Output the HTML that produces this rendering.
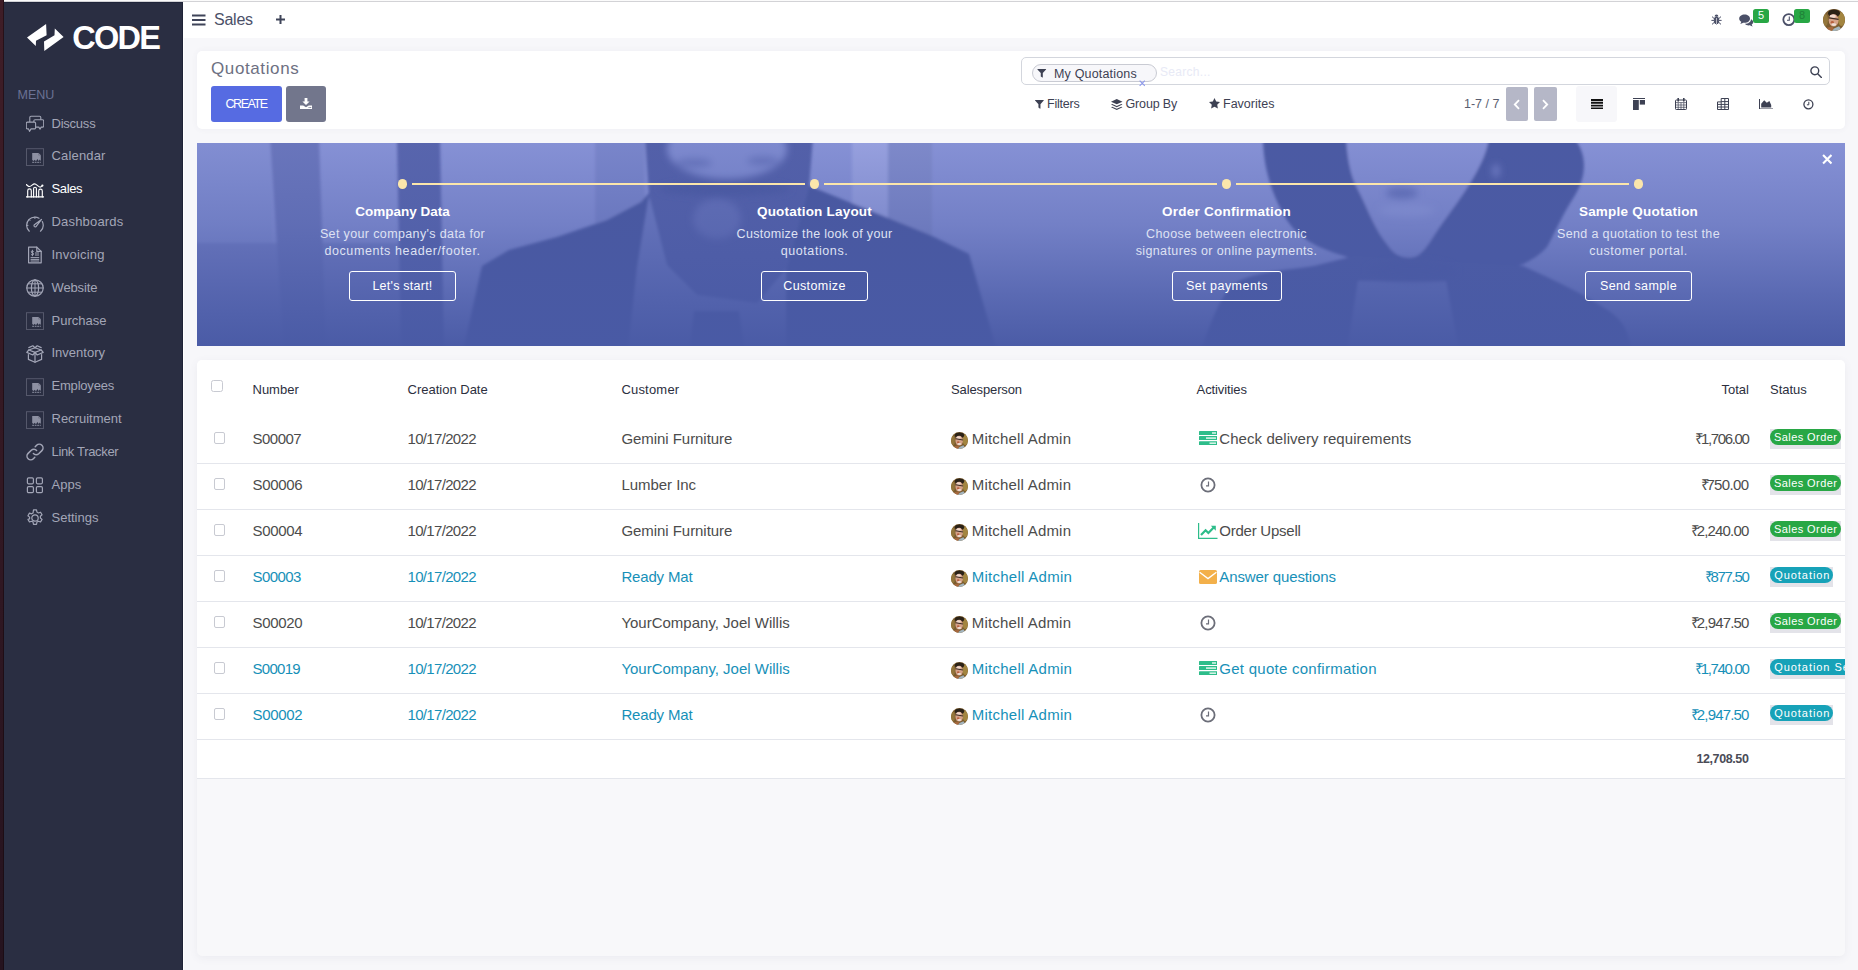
<!DOCTYPE html>
<html lang="en">
<head>
<meta charset="utf-8">
<title>Odoo - Quotations</title>
<style>
*{box-sizing:border-box;margin:0;padding:0}
html,body{width:1858px;height:970px;overflow:hidden}
body{position:relative;background:#f7f7fa;font-family:"Liberation Sans",sans-serif;color:#4c4c4c;font-size:14px}
.abs{position:absolute}
.t{position:absolute;white-space:nowrap;line-height:1}
/* window edge */
#edge{left:0;top:0;width:4px;height:970px;background:linear-gradient(#3f1d27,#25131f);border-right:1px solid rgba(20,8,12,.55)}
#topline{left:4px;top:0;width:1854px;height:2px;background:linear-gradient(#fbfbfb 0,#fbfbfb 50%,#c9c9cc 50%,#dcdce0 100%)}
/* sidebar */
#sidebar{left:4px;top:2px;width:179px;height:968px;background:#2a2e42;border-right:1px solid #1f2337;border-top:1px solid #20253a}
#sidegap{left:183px;top:2px;width:1px;height:968px;background:#fff}
.mi{left:51.5px;font-size:13px;color:#a3a6b7}
.mi.on{color:#fff}
.ic{position:absolute;left:26px;width:18px;height:18px}
/* header */
#header{left:184px;top:2px;width:1674px;height:36px;background:#fff}
/* control panel */
#cp{left:197px;top:51px;width:1648px;height:78px;background:#fff;border-radius:5px;box-shadow:0 0 6px rgba(90,90,120,.06)}
#create{left:211px;top:86px;width:71px;height:36px;background:#566be2;border-radius:3px;color:#fff}
#import{left:286px;top:86px;width:40px;height:36px;background:#72768c;border-radius:3px}
#search{left:1021px;top:57px;width:809px;height:28px;border:1px solid #d3d6dd;border-radius:5px;background:#fff}
#facet{left:1032px;top:64px;width:125px;height:18px;border:1px solid #c9cbd3;border-radius:9px;background:#f7f7fa}
.pg{top:87px;width:22px;height:34px;background:#b5b7c7;border-radius:2px}
#vlist{left:1576px;top:86px;width:41px;height:36px;background:#f7f7fa;border-radius:3px}
/* banner */
#banner{left:197px;top:143px;width:1648px;height:203px;overflow:hidden;background:#6c7cc4}
.bt{font-weight:bold;font-size:14px;color:#fff}
.bd{font-size:13px;color:#dfe2f3}
.bb{position:absolute;top:271px;height:30px;border:1px solid #fff;border-radius:3px}
.bbt{font-size:13px;color:#fff}
/* list */
#list{left:197px;top:360px;width:1648px;height:596px;background:#f8f8fa;border-radius:5px;box-shadow:0 2px 8px rgba(90,90,120,.07);overflow:hidden}
#tbl{left:0;top:0;width:1648px;height:418px;background:#fff}
.sep{position:absolute;left:0;width:1648px;height:1px;background:#e4e6ec}
.th{font-size:12px;color:#2c2f3e}
.td{font-size:14px;color:#4c4c4c}
.bl{color:#1790b8}
.cb{position:absolute;width:11px;height:11px;border:1px solid #c8cad2;border-radius:2px;background:#fff}
.bg{position:absolute;height:20px;background:#e3e3e9}
.pill{position:absolute;left:0;top:0;height:16px;border-radius:8px;color:#fff;font-size:11px;white-space:nowrap;overflow:hidden}
.g{background:#28a745}
.q{background:#17a2b8}
</style>
</head>
<body>
<div id="edge" class="abs"></div>
<div id="topline" class="abs"></div>
<div id="sidebar" class="abs"></div>
<div id="sidegap" class="abs"></div>
<div id="header" class="abs"></div>
<svg class="abs" style="left:26px;top:22px" width="40" height="30" viewBox="26 22 40 30"><path d="M27 37.600L46.100 23.900 46.600 35.300 36 40.700 35.800 46.100z" fill="#fff"/><path d="M44 41.400L54.500 35.300 54.800 28.600 63.600 37 44.300 50.900z" fill="#fff"/></svg>
<div class="t" id="logo" style="left:72.2px;top:22.0px;font-size:32.500px;font-weight:bold;color:#fff;letter-spacing:-1.73px">CODE</div>
<div class="t" id="menu" style="left:17.500px;top:89.0px;font-size:12.500px;color:#6b7294">MENU</div>
<svg class="ic" style="top:114.9px" viewBox="0 0 18 18" fill="none" stroke="#a3a6b7" stroke-width="1.1" stroke-linecap="round" stroke-linejoin="round"><path d="M3.800 7.500V2.400a1.200 1.200 0 0 1 1.200-1.200h8.600a1.200 1.200 0 0 1 1.200 1.200V5"/><path d="M9 4.800h7.500a1.200 1.200 0 0 1 1.200 1.200v4.900a1.200 1.200 0 0 1-1.200 1.200h-1.300l-1.200 2-1.200-2H9a1.200 1.200 0 0 1-1.200-1.200V6A1.200 1.200 0 0 1 9 4.800z" fill="#2a2e42"/><path d="M1.500 7.100h6.900a1.200 1.200 0 0 1 1.200 1.200v4.400a1.200 1.200 0 0 1-1.200 1.200H5l-1.500 2.500-1-2.500h-1a1.200 1.200 0 0 1-1.200-1.200V8.300a1.200 1.200 0 0 1 1.200-1.200z" fill="#2a2e42"/></svg>
<div class="t mi" id="m0" style="top:116.6px;letter-spacing:-0.23px">Discuss</div>
<svg class="ic" style="top:147.8px" viewBox="0 0 18 18"><rect x="0.500" y="0.700" width="17" height="16.800" fill="none" stroke="#55586b" stroke-width="1"/><path d="M6.200 5h6.400l2.200 2.200v6l-1-1.600-1.100 1.400-1.300-2-1.400 2.200-1.300-1.400-1.100 1.200-1.400-1z" fill="#8d90a2"/><path d="M12.600 5v2.200h2.200" fill="none" stroke="#6c6f82" stroke-width=".6"/><path d="M6.200 14.300h8.600" stroke="#8d90a2" stroke-width="1" stroke-dasharray="1.800 .700"/></svg>
<div class="t mi" id="m1" style="top:148.6px;letter-spacing:0.16px">Calendar</div>
<svg class="ic" style="top:180.6px" viewBox="0 0 18 18" fill="none" stroke="#fff" stroke-width="1.15" stroke-linecap="round" stroke-linejoin="round"><path d="M-.1 15.900h18.300" stroke-width="1.400"/><path d="M1.700 15.900V9.700a1.800 1.800 0 0 1 3.600 0V15.900M7.600 15.900V7.600a1.400 1.400 0 0 1 2.800 0V15.900M12.700 15.900V9.900a1.800 1.800 0 0 1 3.600 0V15.900"/><path d="M.2 3.600C1.400 4.200 2.200 5.600 3.600 5.500 5.400 5.400 6.800 2.800 8.600 2.800c1.800 0 3.600 3.200 5.500 3.300.9 0 1.500-.6 2-1.200"/><circle cx="16.400" cy="4.600" r="1.100" fill="#fff" stroke="none"/></svg>
<div class="t mi on" id="m2" style="top:181.6px;letter-spacing:-0.35px">Sales</div>
<svg class="ic" style="top:213.5px" viewBox="0 0 18 18" fill="none" stroke="#a3a6b7" stroke-width="1.2" stroke-linecap="round" stroke-linejoin="round"><path d="M3.300 17.200A8.300 8.300 0 0 1 .6 11.400 8.300 8.300 0 0 1 8.900 3.100c1.500 0 2.900.4 4.100 1.100"/><path d="M16.300 7.600a8.300 8.300 0 0 1-1.800 9.600"/><path d="M15.500 5.400L9 10.300a1.300 1.300 0 0 0-.7 2.100 1.300 1.300 0 0 0 2.100-.2z"/><path d="M8.900 3.100v1.400M.7 11.400h1.300M3.100 5.600l.9.900" stroke-width="1"/></svg>
<div class="t mi" id="m3" style="top:214.6px;letter-spacing:0.18px">Dashboards</div>
<svg class="ic" style="top:246.3px" viewBox="0 0 18 18" fill="none" stroke="#a3a6b7" stroke-width="1.2" stroke-linecap="round" stroke-linejoin="round"><path d="M2.600 1.200h8.200l4.400 4.200v11.400H2.600z"/><path d="M10.800 1.200v4.200h4.400"/><path d="M5 11.600h7.800M5 13.400h7.800M5 15h7.800M9.400 7h3.200M9.400 9h3.200" stroke-width="1"/><path d="M7.600 5.400c-.3-.6-2.400-.8-2.400.5s2.500.7 2.500 2-2.200 1.200-2.600.5M6.400 4.200v5.600" stroke-width="1"/></svg>
<div class="t mi" id="m4" style="top:247.6px;letter-spacing:0.21px">Invoicing</div>
<svg class="ic" style="top:279.1px" viewBox="0 0 18 18" fill="none" stroke="#a3a6b7" stroke-width="1.2" stroke-linecap="round" stroke-linejoin="round"><circle cx="9" cy="9" r="8.200"/><ellipse cx="9" cy="9" rx="3.600" ry="8.200"/><path d="M9 .8v16.400M.8 9h16.400M2 4.800h14M2 13.200h14" stroke-width="1"/></svg>
<div class="t mi" id="m5" style="top:280.6px;letter-spacing:-0.13px">Website</div>
<svg class="ic" style="top:312.0px" viewBox="0 0 18 18"><rect x="0.500" y="0.700" width="17" height="16.800" fill="none" stroke="#55586b" stroke-width="1"/><path d="M6.200 5h6.400l2.200 2.200v6l-1-1.600-1.100 1.400-1.300-2-1.400 2.200-1.300-1.400-1.100 1.200-1.400-1z" fill="#8d90a2"/><path d="M12.600 5v2.200h2.200" fill="none" stroke="#6c6f82" stroke-width=".6"/><path d="M6.200 14.300h8.600" stroke="#8d90a2" stroke-width="1" stroke-dasharray="1.800 .700"/></svg>
<div class="t mi" id="m6" style="top:313.6px">Purchase</div>
<svg class="ic" style="top:344.9px" viewBox="0 0 18 18" fill="none" stroke="#a3a6b7" stroke-width="1.2" stroke-linecap="round" stroke-linejoin="round"><path d="M2.400 9.600v4.800L9 17.200l6.600-2.800V9.600"/><path d="M9 7.400v9.800"/><path d="M2.800 5L9 7.400 15.200 5 9 2.800z"/><path d="M2.800 5L.8 7.400 6.800 10 9 7.400l2.200 2.600 6-2.600-2-2.400"/><path d="M9 2.800L6.800.8 2.800 2.600M9 2.800l2.200-2 4 1.800"/></svg>
<div class="t mi" id="m7" style="top:345.6px">Inventory</div>
<svg class="ic" style="top:377.7px" viewBox="0 0 18 18"><rect x="0.500" y="0.700" width="17" height="16.800" fill="none" stroke="#55586b" stroke-width="1"/><path d="M6.200 5h6.400l2.200 2.200v6l-1-1.600-1.100 1.400-1.300-2-1.400 2.200-1.300-1.400-1.100 1.200-1.400-1z" fill="#8d90a2"/><path d="M12.600 5v2.200h2.200" fill="none" stroke="#6c6f82" stroke-width=".6"/><path d="M6.200 14.300h8.600" stroke="#8d90a2" stroke-width="1" stroke-dasharray="1.800 .700"/></svg>
<div class="t mi" id="m8" style="top:378.6px;letter-spacing:-0.20px">Employees</div>
<svg class="ic" style="top:410.6px" viewBox="0 0 18 18"><rect x="0.500" y="0.700" width="17" height="16.800" fill="none" stroke="#55586b" stroke-width="1"/><path d="M6.200 5h6.400l2.200 2.200v6l-1-1.600-1.100 1.400-1.300-2-1.400 2.200-1.300-1.400-1.100 1.200-1.400-1z" fill="#8d90a2"/><path d="M12.600 5v2.200h2.200" fill="none" stroke="#6c6f82" stroke-width=".6"/><path d="M6.200 14.300h8.600" stroke="#8d90a2" stroke-width="1" stroke-dasharray="1.800 .700"/></svg>
<div class="t mi" id="m9" style="top:411.6px">Recruitment</div>
<svg class="ic" style="top:443.4px" viewBox="0 0 18 18" fill="none" stroke="#a3a6b7" stroke-width="1.2" stroke-linecap="round" stroke-linejoin="round"><path d="M7.400 10.600a3.700 3.700 0 0 0 5.300.2l3.200-3.200a3.700 3.700 0 0 0-5.300-5.300L9.200 3.700" stroke-width="1.500"/><path d="M10.600 7.400a3.700 3.700 0 0 0-5.300-.2L2.100 10.400a3.700 3.700 0 0 0 5.300 5.300l1.400-1.400" stroke-width="1.500"/></svg>
<div class="t mi" id="m10" style="top:444.6px;letter-spacing:-0.33px">Link Tracker</div>
<svg class="ic" style="top:476.2px" viewBox="0 0 18 18" fill="none" stroke="#a3a6b7" stroke-width="1.2" stroke-linecap="round" stroke-linejoin="round" stroke-width="1.4"><rect x="1.400" y="1.800" width="6" height="6" rx="1.200"/><rect x="10.400" y="1.800" width="6" height="6" rx="1.200"/><rect x="1.400" y="10.600" width="6" height="6" rx="1.200"/><rect x="10.400" y="10.600" width="6" height="6" rx="1.200"/></svg>
<div class="t mi" id="m11" style="top:477.6px">Apps</div>
<svg class="ic" style="top:509.1px" viewBox="0 0 18 18" fill="none" stroke="#a3a6b7" stroke-width="1.2" stroke-linecap="round" stroke-linejoin="round"><circle cx="9" cy="9" r="3.200"/><path d="M7.500.9h3l.45 2.200 1.500.85 2.100-.75 1.500 2.600-1.650 1.450v1.700l1.650 1.450-1.500 2.600-2.100-.75-1.500.85-.45 2.200h-3l-.45-2.200-1.500-.85-2.100.75-1.500-2.600L3.600 9.850v-1.700L1.950 6.700l1.500-2.600 2.100.75 1.500-.85z"/></svg>
<div class="t mi" id="m12" style="top:510.6px">Settings</div>
<svg class="abs" style="left:192px;top:14px" width="14" height="12" viewBox="0 0 14 12"><path d="M0 1.500h13.500M0 6h13.500M0 10.500h13.500" stroke="#3f4459" stroke-width="2"/></svg>
<div class="t" id="hsales" style="left:214px;top:12.3px;font-size:16px;color:#4b5068;letter-spacing:-0.25px">Sales</div>
<svg class="abs" style="left:276px;top:15px" width="9" height="9" viewBox="0 0 9 9"><path d="M4.500 0v9M0 4.500h9" stroke="#3f4459" stroke-width="2"/></svg>
<svg class="abs" style="left:1711px;top:14px" width="11" height="11" viewBox="0 0 11 11" fill="none" stroke="#4b5068" stroke-width="1"><ellipse cx="5.500" cy="6.400" rx="2.300" ry="3.600" fill="#4b5068"/><path d="M3.600 2.400a1.900 1.900 0 0 1 3.800 0z" fill="#4b5068" stroke="none"/><path d="M0.400 6.400h2.600M8 6.400h2.600M1 2.600l2.200 2M10 2.600l-2.200 2M1 10.400l2.200-2M10 10.400l-2.200-2"/><path d="M5.500 4v6" stroke="#fff" stroke-width=".6"/></svg>
<svg class="abs" style="left:1739.300px;top:13.500px" width="15" height="13" viewBox="0 0 15 13"><path d="M5.600 0.600c3 0 5.400 1.800 5.400 4.100s-2.400 4.100-5.400 4.100c-.5 0-1-.05-1.400-.15-.9.700-2 1-3 1.100.6-.6 1-1.300 1.100-2C1.100 7 .2 6 .2 4.700.2 2.400 2.600.6 5.600.6z" fill="#4b5068"/><path d="M12 5.200c1.300.6 2.200 1.700 2.200 2.900 0 1-.6 1.900-1.500 2.500.1.700.5 1.300 1 1.800-1-.1-2-.5-2.800-1.100-.4.100-.8.100-1.200.1-1.600 0-3-.6-3.800-1.600 3.200 0 6-1.800 6.100-4.600z" fill="#4b5068"/></svg>
<div class="abs" style="left:1753.200px;top:9px;width:15.800px;height:13.600px;background:#28a745;border-radius:2.500px"></div>
<div class="t" id="b5" style="left:1758px;top:10px;font-size:11px;color:#fff">5</div>
<svg class="abs" style="left:1782px;top:13px" width="14" height="14" viewBox="0 0 14 14" fill="none" stroke="#4b5068"><circle cx="6.800" cy="6.600" r="5.500" stroke-width="1.800"/><path d="M7.300 3.600v3.600H5" stroke-width="1.100"/></svg>
<div class="abs" style="left:1794px;top:9px;width:16px;height:13.600px;background:#28a745;border-radius:2.500px"></div>
<div class="t" id="b8" style="left:1799px;top:10px;font-size:11px;color:#1f7f37">8</div>
<svg class="abs" style="left:1823px;top:9px" width="22" height="22" viewBox="0 0 22 22"><defs><clipPath id="avc"><circle cx="11" cy="11" r="11"/></clipPath><filter id="avb"><feGaussianBlur stdDeviation="0.600"/></filter></defs><g clip-path="url(#avc)"><rect width="22" height="22" fill="#7b5c2f"/><g filter="url(#avb)"><ellipse cx="18.500" cy="10" rx="3.500" ry="7" fill="#a3853f"/><ellipse cx="2.500" cy="11" rx="2.500" ry="6" fill="#94763a"/><ellipse cx="11" cy="4.300" rx="6" ry="3.800" fill="#2a2019"/><ellipse cx="10.600" cy="11.300" rx="4.900" ry="6.300" fill="#d5a288"/><ellipse cx="9.800" cy="7.200" rx="3" ry="1.700" fill="#f0d8cc"/><path d="M6 8.800L15.600 10.400" stroke="#3b2b24" stroke-width="1.300"/><ellipse cx="9.300" cy="13.200" rx="1.600" ry="1.200" fill="#b9603f"/><ellipse cx="10.800" cy="15.600" rx="2.400" ry="1.300" fill="#eedfd8"/><path d="M3 22L4.500 18.500 9 17.500 11 19.500 9 22z" fill="#a5683e"/><path d="M11 19.500L16 17.300 19.500 22 9 22z" fill="#a3b5bf"/></g></g></svg>
<div id="cp" class="abs"></div>
<div class="t" id="qt" style="left:211px;top:59.5px;font-size:17px;color:#6d7082;letter-spacing:0.61px">Quotations</div>
<div id="create" class="abs"></div><div class="t" id="createt" style="left:225.500px;top:98.0px;font-size:12.500px;color:#fff;letter-spacing:-1.46px">CREATE</div>
<div id="import" class="abs"></div>
<svg class="abs" style="left:300px;top:97.500px" width="12" height="11" viewBox="0 0 12 11"><path d="M4.600 0h2.800v3.400h2.200L6 7 2.400 3.400h2.200z" fill="#fff"/><path d="M0 7.400h3.200L6 9.200l2.800-1.800H12V11H0z" fill="#fff"/><rect x="8.600" y="9" width="1" height="1" fill="#72768c"/><rect x="10.200" y="9" width="1" height="1" fill="#72768c"/></svg>
<div id="search" class="abs"></div><div id="facet" class="abs"></div>
<svg class="abs" style="left:1037.4px;top:68.8px" width="9.5" height="8.8" viewBox="0 0 10 10"><path d="M.3 0h9.400c.3 0 .4.300.2.500L6.200 4.600v4.800c0 .3-.3.400-.5.300L3.900 8.400V4.600L.1.500C-.1.300 0 0 .3 0z" fill="#3d4153"/></svg>
<div class="t" id="myq" style="left:1054px;top:68.0px;font-size:12.500px;color:#3d4153;letter-spacing:0.17px">My Quotations</div>
<svg class="abs" style="left:1138.500px;top:80px" width="6.500" height="6.500" viewBox="0 0 7 7"><path d="M.7.7l5.600 5.600M6.300.7L.7 6.300" stroke="#8e9aec" stroke-width="1.200"/></svg>
<div class="t" id="ph" style="left:1160px;top:65.5px;font-size:12px;color:#e8eaf6;letter-spacing:.3px">Search...</div>
<svg class="abs" style="left:1810px;top:66px" width="12" height="12" viewBox="0 0 12 12" fill="none" stroke="#3d4153" stroke-width="1.400"><circle cx="4.800" cy="4.800" r="3.900"/><path d="M7.700 7.700l3.700 3.700" stroke-linecap="round"/></svg>
<svg class="abs" style="left:1035.3px;top:99.8px" width="8.8" height="9" viewBox="0 0 10 10"><path d="M.3 0h9.400c.3 0 .4.300.2.500L6.200 4.600v4.800c0 .3-.3.400-.5.300L3.900 8.400V4.600L.1.500C-.1.300 0 0 .3 0z" fill="#3d4153"/></svg>
<div class="t" id="fil" style="left:1047px;top:98.0px;font-size:12.500px;color:#3d4153;letter-spacing:-0.22px">Filters</div>
<svg class="abs" style="left:1111px;top:98.500px" width="11.500" height="11.500" viewBox="0 0 12 12"><path d="M6 0l6 2.800L6 5.600 0 2.800z" fill="#3d4153"/><path d="M1.300 5.100L0 5.700l6 2.800 6-2.800-1.300-.6L6 7.300z" fill="#3d4153"/><path d="M1.300 8L0 8.600l6 2.800 6-2.800-1.300-.6L6 10.200z" fill="#3d4153"/></svg>
<div class="t" id="grp" style="left:1125.500px;top:98.0px;font-size:12.500px;color:#3d4153;letter-spacing:-0.14px">Group By</div>
<svg class="abs" style="left:1209px;top:98.300px" width="11" height="10.500" viewBox="0 0 11 10.500"><path d="M5.500 0l1.700 3.500 3.800.5-2.800 2.700.7 3.800-3.400-1.800-3.400 1.800.7-3.800L0 4l3.800-.5z" fill="#3d4153"/></svg>
<div class="t" id="fav" style="left:1223px;top:98.0px;font-size:12.500px;color:#3d4153">Favorites</div>
<div class="t" id="pager" style="left:1464px;top:98.0px;font-size:12.500px;color:#5a5e70">1-7 / 7</div>
<div class="abs pg" style="left:1506px"></div><div class="abs pg" style="left:1534px;width:23px"></div>
<svg class="abs" style="left:1513px;top:98.500px" width="8" height="11" viewBox="0 0 8 11" fill="none" stroke="#fff" stroke-width="1.800"><path d="M6 1.200L1.800 5.500 6 9.800"/></svg>
<svg class="abs" style="left:1541px;top:98.500px" width="8" height="11" viewBox="0 0 8 11" fill="none" stroke="#fff" stroke-width="1.800"><path d="M2 1.200L6.200 5.500 2 9.800"/></svg>
<div id="vlist" class="abs"></div>
<svg class="abs" style="left:1590.500px;top:98.700px" width="12.400" height="10.400" viewBox="0 0 12.400 10.400"><path d="M0 1h12.400M0 3.800h12.400M0 6.600h12.400M0 9.400h12.400" stroke="#111" stroke-width="1.900"/></svg>
<svg class="abs" style="left:1632.800px;top:98px" width="12.200" height="12" viewBox="0 0 12.200 12"><rect x="0" y="0" width="12.200" height="1" fill="#3d4153"/><rect x="0" y="2" width="5.800" height="10" fill="#3d4153"/><rect x="6.800" y="2" width="5.400" height="4.600" fill="#3d4153"/></svg>
<svg class="abs" style="left:1675px;top:98px" width="12" height="12" viewBox="0 0 12 12" fill="none" stroke="#3d4153"><rect x=".5" y="2" width="11" height="9.500" rx=".8" stroke-width="1"/><path d="M.5 4.600h11M.5 7h11M.5 9.300h11M3.200 4.600v7M6 4.600v7M8.800 4.600v7" stroke-width=".7"/><path d="M3.200 .3v2.600M8.800 .3v2.600" stroke-width="1.600" stroke-linecap="round"/></svg>
<svg class="abs" style="left:1717px;top:98px" width="12" height="12" viewBox="0 0 12 12" fill="none" stroke="#3d4153" stroke-width="1"><path d="M4.200 .5h7.300v11H.5v-7.600h3.700z"/><path d="M4.200 3.900v7.600M7.800 .5v11M.5 6.400h11M.5 9h11M4.200 3.600h7.300"/></svg>
<svg class="abs" style="left:1759px;top:98.500px" width="14" height="10.500" viewBox="0 0 14 10.500"><path d="M.5 0v10h13.500" fill="none" stroke="#3d4153" stroke-width="1"/><path d="M2.200 8.600V4.800l3-3.600 2.600 2.600 2.600-1.800 1.800 4v2.600z" fill="#3d4153"/></svg>
<svg class="abs" style="left:1803px;top:98.500px" width="11" height="11" viewBox="0 0 11 11" fill="none" stroke="#3d4153"><circle cx="5.400" cy="5.300" r="4.500" stroke-width="1.300"/><path d="M5.800 2.800v3H3.900" stroke-width="1"/></svg>
<div id="banner" class="abs">
<svg class="abs" style="left:0;top:0" width="1648" height="203" viewBox="0 0 1648 203">
<defs>
<filter id="bl2" x="-5%" y="-20%" width="110%" height="140%"><feGaussianBlur stdDeviation="1.600"/></filter>
<filter id="bl5" x="-10%" y="-40%" width="120%" height="180%"><feGaussianBlur stdDeviation="3.500"/></filter>
<linearGradient id="ov" x1="0" y1="0" x2="0" y2="1"><stop offset="0" stop-color="#495aa5" stop-opacity=".02"/><stop offset=".4" stop-color="#495aa5" stop-opacity=".32"/><stop offset=".75" stop-color="#495aa5" stop-opacity=".72"/><stop offset="1" stop-color="#495aa5" stop-opacity=".97"/></linearGradient>
</defs>
<rect width="1648" height="203" fill="#8792d6"/>
<g filter="url(#bl2)">
<rect x="-5" y="-5" width="80" height="215" fill="#838fd3"/>
<rect x="-5" y="100" width="210" height="110" fill="#7480c6"/>
<path d="M73 -5L122 -5L129 208L87 208z" fill="#6a76bc"/>
<path d="M200 -5L243 -5L247 208L204 208z" fill="#5965ad"/>
<rect x="398" y="-5" width="50" height="100" fill="#7a86cb"/><rect x="655" y="-5" width="36" height="110" fill="#98a1df"/>
<rect x="691" y="-5" width="44" height="120" fill="#7f8aca"/>
<path d="M266 208L285 123L312 107L360 94L410 77L444 59L470 30L600 30L610 42L733 92L772 111L800 208z" fill="#4a58a0"/>
<path d="M452 52L473 125L500 150L560 160L589 125L589 208L431 208L440 125z" fill="#6d7ac1"/>
<path d="M497 168L542 168L548 208L492 208z" fill="#4c5aa2"/>
<path d="M448 -5L452 52L470 122L500 152L560 160L590 125L612 45L616 -5z" fill="#5361a9"/>
<path d="M1066 -5C1066 22 1074 50 1088 74S1125 106 1150 114L1185 130L1290 130C1312 128 1336 120 1350 104C1356 94 1364 74 1377 54C1386 40 1394 16 1377 -5z" fill="#4c5aa3"/>
<path d="M1004 208C1014 180 1024 146 1044 137S1100 126 1117 123L1157 113L1326 123C1360 138 1392 154 1412 168S1430 194 1436 208z" fill="#4e5ca4"/>
<path d="M1161 138L1249 138L1262 208L1150 208z" fill="#6e7bc1"/>
<path d="M1149 -5C1150 10 1152 30 1160 45S1176 82 1186 96S1200 114 1212 115S1232 100 1240 88S1262 58 1272 42S1290 10 1292 -5z" fill="#8590d4"/>
</g>
<g filter="url(#bl5)">
<ellipse cx="530" cy="6" rx="60" ry="30" fill="#7e8acf"/>
<ellipse cx="497" cy="20" rx="18" ry="5" fill="#6976bd"/>
<ellipse cx="566" cy="18" rx="16" ry="5" fill="#6976bd"/>
<ellipse cx="528" cy="46" rx="66" ry="7" fill="#4c5aa2"/>
<ellipse cx="520" cy="76" rx="24" ry="20" fill="#6370b7"/>
<ellipse cx="1210" cy="68" rx="28" ry="6" fill="#8e99da"/>
<ellipse cx="1205" cy="50" rx="16" ry="6" fill="#6673bb"/>
<ellipse cx="1215" cy="128" rx="45" ry="10" fill="#4c5aa3"/>
<ellipse cx="1299" cy="28" rx="4" ry="7" fill="#6f7cc3"/>
</g>
<rect width="1648" height="203" fill="url(#ov)"/>
</svg>
<div class="abs" style="left:200.8px;top:36.300px;width:9.400px;height:9.400px;border-radius:50%;background:#fbe6ab"></div>
<div class="abs" style="left:214.8px;top:39.700px;width:393.4px;height:2.600px;background:#fbe6ab"></div>
<div class="abs" style="left:612.8px;top:36.300px;width:9.400px;height:9.400px;border-radius:50%;background:#fbe6ab"></div>
<div class="abs" style="left:626.8px;top:39.700px;width:393.4px;height:2.600px;background:#fbe6ab"></div>
<div class="abs" style="left:1024.8px;top:36.300px;width:9.400px;height:9.400px;border-radius:50%;background:#fbe6ab"></div>
<div class="abs" style="left:1038.8px;top:39.700px;width:393.4px;height:2.600px;background:#fbe6ab"></div>
<div class="abs" style="left:1436.8px;top:36.300px;width:9.400px;height:9.400px;border-radius:50%;background:#fbe6ab"></div>
<div class="t bt" id="bt0" style="left:55.5px;width:300px;text-align:center;top:62px;font-size:13.500px">Company Data</div>
<div class="t bd" id="bd0a" style="left:55.5px;width:300px;text-align:center;top:85.3px;font-size:12.500px;letter-spacing:0.37px">Set your company's data for</div>
<div class="t bd" id="bd0b" style="left:55.5px;width:300px;text-align:center;top:101.9px;font-size:12.500px;letter-spacing:0.60px">documents header/footer.</div>
<div class="bb" style="left:152px;top:128px;width:107px"></div>
<div class="t bbt" id="bb0" style="left:152px;width:107px;text-align:center;top:136.6px;font-size:12.500px;letter-spacing:0.24px">Let's start!</div>
<div class="t bt" id="bt1" style="left:467.5px;width:300px;text-align:center;top:62px;font-size:13.500px;letter-spacing:0.21px">Quotation Layout</div>
<div class="t bd" id="bd1a" style="left:467.5px;width:300px;text-align:center;top:85.3px;font-size:12.500px;letter-spacing:0.30px">Customize the look of your</div>
<div class="t bd" id="bd1b" style="left:467.5px;width:300px;text-align:center;top:101.9px;font-size:12.500px;letter-spacing:0.59px">quotations.</div>
<div class="bb" style="left:564px;top:128px;width:107px"></div>
<div class="t bbt" id="bb1" style="left:564px;width:107px;text-align:center;top:136.6px;font-size:12.500px;letter-spacing:0.39px">Customize</div>
<div class="t bt" id="bt2" style="left:879.5px;width:300px;text-align:center;top:62px;font-size:13.500px;letter-spacing:0.25px">Order Confirmation</div>
<div class="t bd" id="bd2a" style="left:879.5px;width:300px;text-align:center;top:85.3px;font-size:12.500px;letter-spacing:0.41px">Choose between electronic</div>
<div class="t bd" id="bd2b" style="left:879.5px;width:300px;text-align:center;top:101.9px;font-size:12.500px;letter-spacing:0.38px">signatures or online payments.</div>
<div class="bb" style="left:975px;top:128px;width:110px"></div>
<div class="t bbt" id="bb2" style="left:975px;width:110px;text-align:center;top:136.6px;font-size:12.500px;letter-spacing:0.46px">Set payments</div>
<div class="t bt" id="bt3" style="left:1291.5px;width:300px;text-align:center;top:62px;font-size:13.500px;letter-spacing:0.23px">Sample Quotation</div>
<div class="t bd" id="bd3a" style="left:1291.5px;width:300px;text-align:center;top:85.3px;font-size:12.500px;letter-spacing:0.36px">Send a quotation to test the</div>
<div class="t bd" id="bd3b" style="left:1291.5px;width:300px;text-align:center;top:101.9px;font-size:12.500px;letter-spacing:0.57px">customer portal.</div>
<div class="bb" style="left:1388px;top:128px;width:107px"></div>
<div class="t bbt" id="bb3" style="left:1388px;width:107px;text-align:center;top:136.6px;font-size:12.500px;letter-spacing:0.37px">Send sample</div>
<svg class="abs" style="left:1624.500px;top:11px" width="10.500" height="10.500" viewBox="0 0 10 10"><path d="M1 1l8 8M9 1L1 9" stroke="#fff" stroke-width="2"/></svg>
</div>
<div id="list" class="abs"><div id="tbl" class="abs"></div>
<div class="sep" style="top:103px"></div>
<div class="sep" style="top:149px"></div>
<div class="sep" style="top:195px"></div>
<div class="sep" style="top:241px"></div>
<div class="sep" style="top:287px"></div>
<div class="sep" style="top:333px"></div>
<div class="sep" style="top:379px"></div>
<div class="sep" style="top:418px"></div>
<div class="cb" style="left:14px;top:20px;width:12px;height:12px;border-radius:2.500px"></div>
<div class="t th" id="h0" style="left:55.5px;top:23px;font-size:13px">Number</div>
<div class="t th" id="h1" style="left:210.5px;top:23px;font-size:13px">Creation Date</div>
<div class="t th" id="h2" style="left:424.4px;top:23px;font-size:13px;letter-spacing:0.20px">Customer</div>
<div class="t th" id="h3" style="left:754px;top:23px;font-size:13px;letter-spacing:-0.12px">Salesperson</div>
<div class="t th" id="h4" style="left:999.5999999999999px;top:23px;font-size:13px;letter-spacing:-0.10px">Activities</div>
<div class="t th" id="h5" style="right:96px;top:23px;font-size:13px">Total</div>
<div class="t th" id="h6" style="left:1573px;top:23px;font-size:13px">Status</div>
<div class="cb" style="left:17px;top:72.3px;height:12px"></div>
<div class="t td" id="n0" style="left:55.5px;top:71.0px;font-size:15px;letter-spacing:-0.50px">S00007</div>
<div class="t td" id="d0" style="left:210.5px;top:71.0px;font-size:15px;letter-spacing:-0.67px">10/17/2022</div>
<div class="t td" id="c0" style="left:424.4px;top:71.0px;font-size:15px;letter-spacing:-0.05px">Gemini Furniture</div>
<svg class="abs" style="left:754px;top:71.80000000000001px" width="17" height="17" viewBox="0 0 22 22"><g clip-path="url(#avc)"><rect width="22" height="22" fill="#7b5c2f"/><g filter="url(#avb)"><ellipse cx="18.500" cy="10" rx="3.500" ry="7" fill="#a3853f"/><ellipse cx="2.500" cy="11" rx="2.500" ry="6" fill="#94763a"/><ellipse cx="11" cy="4.300" rx="6" ry="3.800" fill="#2a2019"/><ellipse cx="10.600" cy="11.300" rx="4.900" ry="6.300" fill="#d5a288"/><ellipse cx="9.800" cy="7.200" rx="3" ry="1.700" fill="#f0d8cc"/><path d="M6 8.800L15.600 10.400" stroke="#3b2b24" stroke-width="1.300"/><ellipse cx="9.300" cy="13.200" rx="1.600" ry="1.200" fill="#b9603f"/><ellipse cx="10.800" cy="15.600" rx="2.400" ry="1.300" fill="#eedfd8"/><path d="M3 22L4.500 18.500 9 17.500 11 19.500 9 22z" fill="#a5683e"/><path d="M11 19.500L16 17.300 19.500 22 9 22z" fill="#a3b5bf"/></g></g></svg>
<div class="t td" id="s0" style="left:774.7px;top:71.0px;font-size:15px;letter-spacing:0.20px">Mitchell Admin</div>
<svg class="abs" style="left:1001.8px;top:71px" width="18.400" height="14.200" viewBox="0 0 18.400 14.200"><rect y="0" width="18.400" height="4" rx=".6" fill="#2dbd8a"/><rect y="5.100" width="18.400" height="4" rx=".6" fill="#2dbd8a"/><rect y="10.200" width="18.400" height="4" rx=".6" fill="#2dbd8a"/><rect x="13" y="1.200" width="4" height="1.600" fill="#d5f3e7"/><rect x="7" y="6.300" width="10" height="1.600" fill="#d5f3e7"/><rect x="10.500" y="11.400" width="6.500" height="1.600" fill="#d5f3e7"/></svg>
<div class="t td" id="a0" style="left:1022.3px;top:71.0px;font-size:15px;letter-spacing:0.07px">Check delivery requirements</div>
<div class="t td" id="t0" style="right:96.5px;top:71.0px;font-size:15px;letter-spacing:-1.35px"><span style="margin-right:-3.2px;font-size:15px;letter-spacing:0">&#8377;</span>1,706.00</div>
<div class="bg" style="left:1573px;top:69px;width:71px"><div class="pill g" id="p0" style="width:71px;padding:2px 0 0 4px;letter-spacing:0.42px">Sales Order</div></div>
<div class="cb" style="left:17px;top:118.3px;height:12px"></div>
<div class="t td" id="n1" style="left:55.5px;top:117.0px;font-size:15px;letter-spacing:-0.34px">S00006</div>
<div class="t td" id="d1" style="left:210.5px;top:117.0px;font-size:15px;letter-spacing:-0.67px">10/17/2022</div>
<div class="t td" id="c1" style="left:424.4px;top:117.0px;font-size:15px;letter-spacing:-0.04px">Lumber Inc</div>
<svg class="abs" style="left:754px;top:117.80000000000001px" width="17" height="17" viewBox="0 0 22 22"><g clip-path="url(#avc)"><rect width="22" height="22" fill="#7b5c2f"/><g filter="url(#avb)"><ellipse cx="18.500" cy="10" rx="3.500" ry="7" fill="#a3853f"/><ellipse cx="2.500" cy="11" rx="2.500" ry="6" fill="#94763a"/><ellipse cx="11" cy="4.300" rx="6" ry="3.800" fill="#2a2019"/><ellipse cx="10.600" cy="11.300" rx="4.900" ry="6.300" fill="#d5a288"/><ellipse cx="9.800" cy="7.200" rx="3" ry="1.700" fill="#f0d8cc"/><path d="M6 8.800L15.600 10.400" stroke="#3b2b24" stroke-width="1.300"/><ellipse cx="9.300" cy="13.200" rx="1.600" ry="1.200" fill="#b9603f"/><ellipse cx="10.800" cy="15.600" rx="2.400" ry="1.300" fill="#eedfd8"/><path d="M3 22L4.500 18.500 9 17.500 11 19.500 9 22z" fill="#a5683e"/><path d="M11 19.500L16 17.300 19.500 22 9 22z" fill="#a3b5bf"/></g></g></svg>
<div class="t td" id="s1" style="left:774.7px;top:117.0px;font-size:15px;letter-spacing:0.20px">Mitchell Admin</div>
<svg class="abs" style="left:1002.8px;top:116.60000000000002px" width="16" height="16" viewBox="0 0 16 16" fill="none" stroke="#6c6e79"><circle cx="8" cy="8" r="6.600" stroke-width="1.800"/><path d="M8.500 4.600v4.200H6" stroke-width="1.200"/></svg>
<div class="t td" id="t1" style="right:96.5px;top:117.0px;font-size:15px;letter-spacing:-0.63px"><span style="margin-right:-3.2px;font-size:15px;letter-spacing:0">&#8377;</span>750.00</div>
<div class="bg" style="left:1573px;top:115px;width:71px"><div class="pill g" id="p1" style="width:71px;padding:2px 0 0 4px;letter-spacing:0.42px">Sales Order</div></div>
<div class="cb" style="left:17px;top:164.3px;height:12px"></div>
<div class="t td" id="n2" style="left:55.5px;top:163.0px;font-size:15px;letter-spacing:-0.34px">S00004</div>
<div class="t td" id="d2" style="left:210.5px;top:163.0px;font-size:15px;letter-spacing:-0.67px">10/17/2022</div>
<div class="t td" id="c2" style="left:424.4px;top:163.0px;font-size:15px;letter-spacing:-0.05px">Gemini Furniture</div>
<svg class="abs" style="left:754px;top:163.79999999999995px" width="17" height="17" viewBox="0 0 22 22"><g clip-path="url(#avc)"><rect width="22" height="22" fill="#7b5c2f"/><g filter="url(#avb)"><ellipse cx="18.500" cy="10" rx="3.500" ry="7" fill="#a3853f"/><ellipse cx="2.500" cy="11" rx="2.500" ry="6" fill="#94763a"/><ellipse cx="11" cy="4.300" rx="6" ry="3.800" fill="#2a2019"/><ellipse cx="10.600" cy="11.300" rx="4.900" ry="6.300" fill="#d5a288"/><ellipse cx="9.800" cy="7.200" rx="3" ry="1.700" fill="#f0d8cc"/><path d="M6 8.800L15.600 10.400" stroke="#3b2b24" stroke-width="1.300"/><ellipse cx="9.300" cy="13.200" rx="1.600" ry="1.200" fill="#b9603f"/><ellipse cx="10.800" cy="15.600" rx="2.400" ry="1.300" fill="#eedfd8"/><path d="M3 22L4.500 18.500 9 17.500 11 19.500 9 22z" fill="#a5683e"/><path d="M11 19.500L16 17.300 19.500 22 9 22z" fill="#a3b5bf"/></g></g></svg>
<div class="t td" id="s2" style="left:774.7px;top:163.0px;font-size:15px;letter-spacing:0.20px">Mitchell Admin</div>
<svg class="abs" style="left:1001px;top:162.60000000000002px" width="19.500" height="16" viewBox="0 0 19.500 16" fill="none" stroke="#2dbd8a"><path d="M.6 0v15.400h18.900" stroke-width="1.200"/><path d="M3 12l4.600-4.800 2.800 2.800 5.800-6" stroke-width="2.200"/><path d="M12.800 2.800h5v5z" fill="#2dbd8a" stroke="none"/></svg>
<div class="t td" id="a2" style="left:1022.3px;top:163.0px;font-size:15px;letter-spacing:-0.24px">Order Upsell</div>
<div class="t td" id="t2" style="right:96.5px;top:163.0px;font-size:15px;letter-spacing:-0.82px"><span style="margin-right:-3.2px;font-size:15px;letter-spacing:0">&#8377;</span>2,240.00</div>
<div class="bg" style="left:1573px;top:161px;width:71px"><div class="pill g" id="p2" style="width:71px;padding:2px 0 0 4px;letter-spacing:0.42px">Sales Order</div></div>
<div class="cb" style="left:17px;top:210.3px;height:12px"></div>
<div class="t td bl" id="n3" style="left:55.5px;top:209.0px;font-size:15px;letter-spacing:-0.56px">S00003</div>
<div class="t td bl" id="d3" style="left:210.5px;top:209.0px;font-size:15px;letter-spacing:-0.67px">10/17/2022</div>
<div class="t td bl" id="c3" style="left:424.4px;top:209.0px;font-size:15px;letter-spacing:-0.16px">Ready Mat</div>
<svg class="abs" style="left:754px;top:209.79999999999995px" width="17" height="17" viewBox="0 0 22 22"><g clip-path="url(#avc)"><rect width="22" height="22" fill="#7b5c2f"/><g filter="url(#avb)"><ellipse cx="18.500" cy="10" rx="3.500" ry="7" fill="#a3853f"/><ellipse cx="2.500" cy="11" rx="2.500" ry="6" fill="#94763a"/><ellipse cx="11" cy="4.300" rx="6" ry="3.800" fill="#2a2019"/><ellipse cx="10.600" cy="11.300" rx="4.900" ry="6.300" fill="#d5a288"/><ellipse cx="9.800" cy="7.200" rx="3" ry="1.700" fill="#f0d8cc"/><path d="M6 8.800L15.600 10.400" stroke="#3b2b24" stroke-width="1.300"/><ellipse cx="9.300" cy="13.200" rx="1.600" ry="1.200" fill="#b9603f"/><ellipse cx="10.800" cy="15.600" rx="2.400" ry="1.300" fill="#eedfd8"/><path d="M3 22L4.500 18.500 9 17.500 11 19.500 9 22z" fill="#a5683e"/><path d="M11 19.500L16 17.300 19.500 22 9 22z" fill="#a3b5bf"/></g></g></svg>
<div class="t td bl" id="s3" style="left:774.7px;top:209.0px;font-size:15px;letter-spacing:0.27px">Mitchell Admin</div>
<svg class="abs" style="left:1001.5999999999999px;top:210.20000000000005px" width="18" height="14" viewBox="0 0 18 14"><rect width="18" height="14" rx="1.600" fill="#f3b04a"/><path d="M.6 2.200L9 8.600l8.400-6.400" fill="none" stroke="#fff" stroke-width="1.300"/></svg>
<div class="t td bl" id="a3" style="left:1022.3px;top:209.0px;font-size:15px;letter-spacing:-0.11px">Answer questions</div>
<div class="t td bl" id="t3" style="right:96.5px;top:209.0px;font-size:15px;letter-spacing:-1.32px"><span style="margin-right:-3.2px;font-size:15px;letter-spacing:0">&#8377;</span>877.50</div>
<div class="bg" style="left:1573px;top:207px;width:63px"><div class="pill q" id="p3" style="width:63px;padding:2px 0 0 4.2px;letter-spacing:0.95px">Quotation</div></div>
<div class="cb" style="left:17px;top:256.3px;height:12px"></div>
<div class="t td" id="n4" style="left:55.5px;top:255.0px;font-size:15px;letter-spacing:-0.34px">S00020</div>
<div class="t td" id="d4" style="left:210.5px;top:255.0px;font-size:15px;letter-spacing:-0.67px">10/17/2022</div>
<div class="t td" id="c4" style="left:424.4px;top:255.0px;font-size:15px;letter-spacing:0.00px">YourCompany, Joel Willis</div>
<svg class="abs" style="left:754px;top:255.79999999999995px" width="17" height="17" viewBox="0 0 22 22"><g clip-path="url(#avc)"><rect width="22" height="22" fill="#7b5c2f"/><g filter="url(#avb)"><ellipse cx="18.500" cy="10" rx="3.500" ry="7" fill="#a3853f"/><ellipse cx="2.500" cy="11" rx="2.500" ry="6" fill="#94763a"/><ellipse cx="11" cy="4.300" rx="6" ry="3.800" fill="#2a2019"/><ellipse cx="10.600" cy="11.300" rx="4.900" ry="6.300" fill="#d5a288"/><ellipse cx="9.800" cy="7.200" rx="3" ry="1.700" fill="#f0d8cc"/><path d="M6 8.800L15.600 10.400" stroke="#3b2b24" stroke-width="1.300"/><ellipse cx="9.300" cy="13.200" rx="1.600" ry="1.200" fill="#b9603f"/><ellipse cx="10.800" cy="15.600" rx="2.400" ry="1.300" fill="#eedfd8"/><path d="M3 22L4.500 18.500 9 17.500 11 19.500 9 22z" fill="#a5683e"/><path d="M11 19.500L16 17.300 19.500 22 9 22z" fill="#a3b5bf"/></g></g></svg>
<div class="t td" id="s4" style="left:774.7px;top:255.0px;font-size:15px;letter-spacing:0.20px">Mitchell Admin</div>
<svg class="abs" style="left:1002.8px;top:254.60000000000002px" width="16" height="16" viewBox="0 0 16 16" fill="none" stroke="#6c6e79"><circle cx="8" cy="8" r="6.600" stroke-width="1.800"/><path d="M8.500 4.600v4.200H6" stroke-width="1.200"/></svg>
<div class="t td" id="t4" style="right:96.5px;top:255.0px;font-size:15px;letter-spacing:-0.84px"><span style="margin-right:-3.2px;font-size:15px;letter-spacing:0">&#8377;</span>2,947.50</div>
<div class="bg" style="left:1573px;top:253px;width:71px"><div class="pill g" id="p4" style="width:71px;padding:2px 0 0 4px;letter-spacing:0.42px">Sales Order</div></div>
<div class="cb" style="left:17px;top:302.3px;height:12px"></div>
<div class="t td bl" id="n5" style="left:55.5px;top:301.0px;font-size:15px;letter-spacing:-0.72px">S00019</div>
<div class="t td bl" id="d5" style="left:210.5px;top:301.0px;font-size:15px;letter-spacing:-0.67px">10/17/2022</div>
<div class="t td bl" id="c5" style="left:424.4px;top:301.0px;font-size:15px;letter-spacing:0.00px">YourCompany, Joel Willis</div>
<svg class="abs" style="left:754px;top:301.79999999999995px" width="17" height="17" viewBox="0 0 22 22"><g clip-path="url(#avc)"><rect width="22" height="22" fill="#7b5c2f"/><g filter="url(#avb)"><ellipse cx="18.500" cy="10" rx="3.500" ry="7" fill="#a3853f"/><ellipse cx="2.500" cy="11" rx="2.500" ry="6" fill="#94763a"/><ellipse cx="11" cy="4.300" rx="6" ry="3.800" fill="#2a2019"/><ellipse cx="10.600" cy="11.300" rx="4.900" ry="6.300" fill="#d5a288"/><ellipse cx="9.800" cy="7.200" rx="3" ry="1.700" fill="#f0d8cc"/><path d="M6 8.800L15.600 10.400" stroke="#3b2b24" stroke-width="1.300"/><ellipse cx="9.300" cy="13.200" rx="1.600" ry="1.200" fill="#b9603f"/><ellipse cx="10.800" cy="15.600" rx="2.400" ry="1.300" fill="#eedfd8"/><path d="M3 22L4.500 18.500 9 17.500 11 19.500 9 22z" fill="#a5683e"/><path d="M11 19.500L16 17.300 19.500 22 9 22z" fill="#a3b5bf"/></g></g></svg>
<div class="t td bl" id="s5" style="left:774.7px;top:301.0px;font-size:15px;letter-spacing:0.27px">Mitchell Admin</div>
<svg class="abs" style="left:1001.8px;top:301px" width="18.400" height="14.200" viewBox="0 0 18.400 14.200"><rect y="0" width="18.400" height="4" rx=".6" fill="#2dbd8a"/><rect y="5.100" width="18.400" height="4" rx=".6" fill="#2dbd8a"/><rect y="10.200" width="18.400" height="4" rx=".6" fill="#2dbd8a"/><rect x="13" y="1.200" width="4" height="1.600" fill="#d5f3e7"/><rect x="7" y="6.300" width="10" height="1.600" fill="#d5f3e7"/><rect x="10.500" y="11.400" width="6.500" height="1.600" fill="#d5f3e7"/></svg>
<div class="t td bl" id="a5" style="left:1022.3px;top:301.0px;font-size:15px;letter-spacing:0.26px">Get quote confirmation</div>
<div class="t td bl" id="t5" style="right:96.5px;top:301.0px;font-size:15px;letter-spacing:-1.32px"><span style="margin-right:-3.2px;font-size:15px;letter-spacing:0">&#8377;</span>1,740.00</div>
<div class="bg" style="left:1573px;top:299px;width:75px"><div class="pill q" id="p5" style="width:90px;padding:2px 0 0 4.2px;letter-spacing:0.95px">Quotation Sent</div></div>
<div class="cb" style="left:17px;top:348.3px;height:12px"></div>
<div class="t td bl" id="n6" style="left:55.5px;top:347.0px;font-size:15px;letter-spacing:-0.34px">S00002</div>
<div class="t td bl" id="d6" style="left:210.5px;top:347.0px;font-size:15px;letter-spacing:-0.67px">10/17/2022</div>
<div class="t td bl" id="c6" style="left:424.4px;top:347.0px;font-size:15px;letter-spacing:-0.16px">Ready Mat</div>
<svg class="abs" style="left:754px;top:347.79999999999995px" width="17" height="17" viewBox="0 0 22 22"><g clip-path="url(#avc)"><rect width="22" height="22" fill="#7b5c2f"/><g filter="url(#avb)"><ellipse cx="18.500" cy="10" rx="3.500" ry="7" fill="#a3853f"/><ellipse cx="2.500" cy="11" rx="2.500" ry="6" fill="#94763a"/><ellipse cx="11" cy="4.300" rx="6" ry="3.800" fill="#2a2019"/><ellipse cx="10.600" cy="11.300" rx="4.900" ry="6.300" fill="#d5a288"/><ellipse cx="9.800" cy="7.200" rx="3" ry="1.700" fill="#f0d8cc"/><path d="M6 8.800L15.600 10.400" stroke="#3b2b24" stroke-width="1.300"/><ellipse cx="9.300" cy="13.200" rx="1.600" ry="1.200" fill="#b9603f"/><ellipse cx="10.800" cy="15.600" rx="2.400" ry="1.300" fill="#eedfd8"/><path d="M3 22L4.500 18.500 9 17.500 11 19.500 9 22z" fill="#a5683e"/><path d="M11 19.500L16 17.300 19.500 22 9 22z" fill="#a3b5bf"/></g></g></svg>
<div class="t td bl" id="s6" style="left:774.7px;top:347.0px;font-size:15px;letter-spacing:0.27px">Mitchell Admin</div>
<svg class="abs" style="left:1002.8px;top:346.6px" width="16" height="16" viewBox="0 0 16 16" fill="none" stroke="#6c6e79"><circle cx="8" cy="8" r="6.600" stroke-width="1.800"/><path d="M8.500 4.600v4.200H6" stroke-width="1.200"/></svg>
<div class="t td bl" id="t6" style="right:96.5px;top:347.0px;font-size:15px;letter-spacing:-0.84px"><span style="margin-right:-3.2px;font-size:15px;letter-spacing:0">&#8377;</span>2,947.50</div>
<div class="bg" style="left:1573px;top:345px;width:63px"><div class="pill q" id="p6" style="width:63px;padding:2px 0 0 4.2px;letter-spacing:0.95px">Quotation</div></div>
<div class="t" id="tot" style="right:96.5px;top:393px;font-size:12.500px;font-weight:bold;color:#4a4c57;letter-spacing:-0.39px">12,708.50</div>
</div>
</body>
</html>
